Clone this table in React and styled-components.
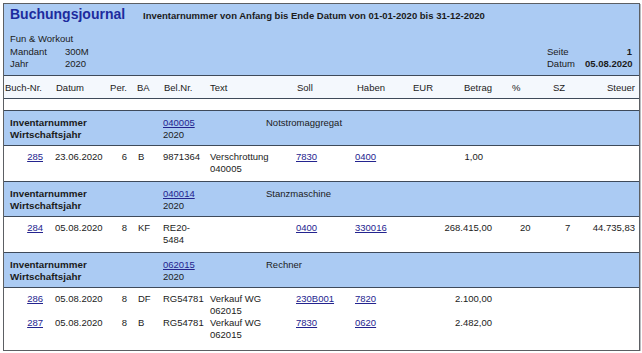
import React from "react";
import styled, { createGlobalStyle } from "styled-components";

const Global = createGlobalStyle`
  html, body { margin: 0; padding: 0; background: #ffffff; }
  body { font-family: "Liberation Sans", Arial, sans-serif; color: #1b1b1b; }
`;

const COLS = [
  { w: 46, h: ["left", 1], d: ["right", 7] },
  { w: 58, h: ["left", 6], d: ["left", 5] },
  { w: 24, h: ["right", 5], d: ["right", 5] },
  { w: 28, h: ["left", 5], d: ["left", 6] },
  { w: 45, h: ["left", 4], d: ["left", 3] },
  { w: 85, h: ["left", 5], d: ["left", 5] },
  { w: 60, h: ["left", 7], d: ["left", 6] },
  { w: 55, h: ["left", 7], d: ["left", 5] },
  { w: 35, h: ["left", 8], d: ["left", 8] },
  { w: 60, h: ["right", 8], d: ["right", 8] },
  { w: 40, h: ["left", 12], d: ["left", 20] },
  { w: 40, h: ["left", 13], d: ["left", 25] },
  { w: 59, h: ["right", 4], d: ["right", 4] },
];
const TEMPLATE = COLS.map((c) => `${c.w}px`).join(" ");

const Frame = styled.div`
  margin: 3px 0 0 3px;
  width: 637px;
  height: 348px;
  box-sizing: border-box;
  border: 1px solid #5c5f63;
  box-shadow: 1px 1px 0 #b9bcc0;
  background: #ffffff;
  overflow: hidden;
  font-size: 9.5px;
  line-height: 12px;
`;

const Header = styled.div`
  height: 71px;
  box-sizing: border-box;
  background: #abcbf3;
  padding: 2px 7px 0 6px;
  display: flex;
  flex-direction: column;
`;

const TitleRow = styled.div`
  display: flex;
  align-items: baseline;
`;

const Title = styled.div`
  width: 133px;
  font-size: 14px;
  line-height: 16px;
  font-weight: bold;
  color: #1d2b9e;
`;

const Subtitle = styled.div`
  font-weight: bold;
  color: #1b1b1b;
`;

const InfoRow = styled.div`
  margin-top: 11px;
  display: flex;
  justify-content: space-between;
  align-items: flex-end;
`;

const InfoGrid = styled.div`
  display: grid;
  grid-template-columns: ${(p) => p.$cols};
`;

const Full = styled.div`
  grid-column: 1 / -1;
  margin-bottom: 1px;
`;

const Value = styled.div`
  text-align: ${(p) => p.$align || "left"};
  font-weight: ${(p) => (p.$bold ? "bold" : "normal")};
`;

const Row = styled.div`
  display: grid;
  grid-template-columns: ${TEMPLATE};
  border-top: 1px solid #3e4a5a;
  background: ${(p) => p.$bg || "#ffffff"};
  padding: ${(p) => p.$pad};
`;

const Cell = styled.div`
  text-align: ${(p) => p.$align};
  padding-left: ${(p) => (p.$align === "left" ? p.$pad : 0)}px;
  padding-right: ${(p) => (p.$align === "right" ? p.$pad : 0)}px;
  white-space: nowrap;
`;

const Blank = styled.div`
  height: 11px;
  border-top: 1px solid #3e4a5a;
`;

const GroupRow = styled.div`
  display: flex;
  border-top: 1px solid #3e4a5a;
  background: #abcbf3;
  padding: 6px 0 4px;
`;

const GroupLabel = styled.div`
  width: 153px;
  padding-left: 6px;
  font-weight: bold;
  font-size: 9.8px;
`;

const GroupCode = styled.div`
  width: 103px;
`;

const GroupName = styled.div``;

const DataBlock = styled.div`
  border-top: 1px solid #3e4a5a;
  padding: 5px 0 6px;
`;

const Entry = styled.div`
  display: grid;
  grid-template-columns: ${TEMPLATE};
`;

const Link = styled.a`
  color: #24248f;
  text-decoration: underline;
  cursor: pointer;
`;

const HEADS = ["Buch-Nr.", "Datum", "Per.", "BA", "Bel.Nr.", "Text", "Soll", "Haben", "EUR", "Betrag", "%", "SZ", "Steuer"];

const GROUPS = [
  {
    code: "040005",
    name: "Notstromaggregat",
    entries: [
      { nr: "285", date: "23.06.2020", per: "6", ba: "B", bel: ["9871364"], text: ["Verschrottung", "040005"], soll: "7830", haben: "0400", betrag: "1,00", betragPad: 17 },
    ],
  },
  {
    code: "040014",
    name: "Stanzmaschine",
    entries: [
      { nr: "284", date: "05.08.2020", per: "8", ba: "KF", bel: ["RE20-", "5484"], text: [], soll: "0400", haben: "330016", betrag: "268.415,00", pct: "20", sz: "7", steuer: "44.735,83" },
    ],
  },
  {
    code: "062015",
    name: "Rechner",
    entries: [
      { nr: "286", date: "05.08.2020", per: "8", ba: "DF", bel: ["RG54781"], text: ["Verkauf WG", "062015"], soll: "230B001", haben: "7820", betrag: "2.100,00" },
      { nr: "287", date: "05.08.2020", per: "8", ba: "B", bel: ["RG54781"], text: ["Verkauf WG", "062015"], soll: "7830", haben: "0620", betrag: "2.482,00" },
    ],
  },
];

const Lines = ({ items }) =>
  items.map((t, i) => <div key={i}>{t}</div>);

function EntryRow({ e }) {
  const vals = [
    <Link>{e.nr}</Link>,
    e.date,
    e.per,
    e.ba,
    <Lines items={e.bel} />,
    <Lines items={e.text} />,
    <Link>{e.soll}</Link>,
    <Link>{e.haben}</Link>,
    "",
    e.betrag,
    e.pct || "",
    e.sz || "",
    e.steuer || "",
  ];
  return (
    <Entry>
      {vals.map((v, i) => (
        <Cell key={i} $align={COLS[i].d[0]} $pad={i === 9 && e.betragPad ? e.betragPad : COLS[i].d[1]}>
          {v}
        </Cell>
      ))}
    </Entry>
  );
}

export default function App() {
  return (
    <>
      <Global />
      <Frame>
        <Header>
          <TitleRow>
            <Title>Buchungsjournal</Title>
            <Subtitle>Inventarnummer von Anfang bis Ende Datum von 01-01-2020 bis 31-12-2020</Subtitle>
          </TitleRow>
          <InfoRow>
            <InfoGrid $cols="55px 40px">
              <Full>Fun &amp; Workout</Full>
              <Value>Mandant</Value>
              <Value>300M</Value>
              <Value>Jahr</Value>
              <Value>2020</Value>
            </InfoGrid>
            <InfoGrid $cols="38px 47px">
              <Value>Seite</Value>
              <Value $align="right" $bold>1</Value>
              <Value>Datum</Value>
              <Value $align="right" $bold>05.08.2020</Value>
            </InfoGrid>
          </InfoRow>
        </Header>
        <Row $bg="#f4f8fd" $pad="6px 0 4px">
          {HEADS.map((h, i) => (
            <Cell key={h} $align={COLS[i].h[0]} $pad={COLS[i].h[1]}>
              {h}
            </Cell>
          ))}
        </Row>
        <Blank />
        {GROUPS.map((g) => (
          <React.Fragment key={g.code}>
            <GroupRow>
              <GroupLabel>
                <div>Inventarnummer</div>
                <div>Wirtschaftsjahr</div>
              </GroupLabel>
              <GroupCode>
                <div><Link>{g.code}</Link></div>
                <div>2020</div>
              </GroupCode>
              <GroupName>{g.name}</GroupName>
            </GroupRow>
            <DataBlock>
              {g.entries.map((e) => (
                <EntryRow key={e.nr} e={e} />
              ))}
            </DataBlock>
          </React.Fragment>
        ))}
      </Frame>
    </>
  );
}
